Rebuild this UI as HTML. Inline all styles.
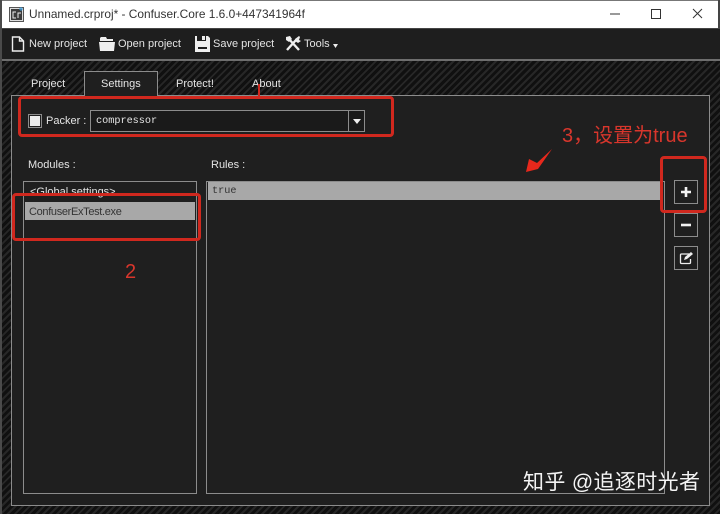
<!DOCTYPE html>
<html><head><meta charset="utf-8">
<style>
html,body{margin:0;padding:0;background:#111}
#r{position:relative;width:720px;height:514px;overflow:hidden;font-family:"Liberation Sans","Noto Sans CJK SC",sans-serif;color:#e4e4e4;font-size:11px;
background:repeating-linear-gradient(135deg,#101010 0 3px,#272727 3px 5px)}
#r div{position:absolute;box-sizing:border-box;white-space:nowrap}
.t{line-height:14px}
.mono{font-family:"Liberation Mono","DejaVu Sans Mono",monospace;font-size:10.2px}
.b{border:1px solid #8c8c8c}
.red{border:3px solid #d0281e;border-radius:4px}
</style></head><body><div id="r">
<div style="left:0;top:0;width:720px;height:28px;background:#fff"></div>
<div style="left:0;top:0;width:720px;height:1px;background:#777"></div>
<div style="left:0;top:0;width:2px;height:514px;background:#4a4a4a"></div>
<div style="left:718px;top:0;width:2px;height:28px;background:#444"></div>
<div style="left:2px;top:28px;width:718px;height:31px;background:#1e1e1e;border-top:1px solid #444"></div>
<div style="left:2px;top:59px;width:718px;height:2px;background:#6e6e6e"></div>

<svg style="position:absolute;left:9px;top:7px" width="16" height="15" viewBox="0 0 16 15"><rect x="0.5" y="0.5" width="14" height="14" fill="#ddd" stroke="#555"/><rect x="2" y="2" width="11" height="11" fill="#3c3c3c"/><path d="M7 5H4v6h3M9 11V6h3" stroke="#eee" fill="none"/><path d="M12 0v4M10 2h4" stroke="#3a9ad9"/></svg>
<div class="t" style="left:29px;top:7px;color:#333;font-size:11.900px">Unnamed.crproj* - Confuser.Core 1.6.0+447341964f</div>
<svg style="position:absolute;left:610px;top:5px" width="100" height="18" viewBox="0 0 100 18"><path d="M0 9h10" stroke="#333" stroke-width="1"/><rect x="41.500" y="4.500" width="9" height="9" fill="none" stroke="#333"/><path d="M83 4l9 9M92 4l-9 9" stroke="#333" fill="none"/></svg>

<svg style="position:absolute;left:11px;top:36px" width="14" height="16" viewBox="0 0 14 16"><path d="M1.500 1h7l4 4v10h-11zM8.500 1v4h4" fill="#1e1e1e" stroke="#eee" stroke-width="1.400"/></svg>
<div class="t" style="left:29px;top:37px">New project</div>
<svg style="position:absolute;left:99px;top:37px" width="16" height="14" viewBox="0 0 16 14"><path d="M2 0h5l1 2h6v2H1V1zM0 5h16l-1 9H1z" fill="#eee"/></svg>
<div class="t" style="left:118px;top:37px">Open project</div>
<svg style="position:absolute;left:195px;top:36px" width="15" height="16" viewBox="0 0 15 16"><path d="M0 0h2v5h9V0h2l2 2v14H0z" fill="#eee"/><rect x="3" y="11" width="9" height="2" fill="#1e1e1e"/><rect x="7" y="0" width="3" height="4" fill="#eee"/></svg>
<div class="t" style="left:213px;top:37px">Save project</div>
<svg style="position:absolute;left:285px;top:36px" width="16" height="16" viewBox="0 0 16 16"><path d="M2 14L11 4M3 2l11 12" stroke="#eee" stroke-width="2.400" fill="none"/><path d="M1 1l4-1 2 3-3 3-3-2zM10 3l4-3 1 1-1 3 2 1-3 2-3-2z" fill="#eee"/></svg>
<div class="t" style="left:304px;top:37px">Tools</div>
<svg style="position:absolute;left:333px;top:44px" width="5" height="4"><path d="M0 0h5L2.500 4z" fill="#eee"/></svg>

<div class="t" style="left:31px;top:77px">Project</div>
<div class="t" style="left:176px;top:77px">Protect!</div>
<div class="t" style="left:252px;top:77px">About</div>

<div class="b" style="left:11px;top:95px;width:699px;height:411px;background:#1f1f1f"></div>
<div class="b" style="left:84px;top:71px;width:74px;height:25px;background:#1f1f1f;border-bottom:0"></div>
<div class="t" style="left:101px;top:77px">Settings</div>

<div class="b" style="left:28px;top:114px;width:14px;height:14px;background:#1f1f1f"></div>
<div style="left:30px;top:116px;width:10px;height:10px;background:#ececec"></div>
<div class="t" style="left:46px;top:114px">Packer :</div>
<div class="b" style="left:90px;top:110px;width:275px;height:22px;background:#1a1a1a"></div>
<div style="left:348px;top:110px;width:1px;height:22px;background:#8c8c8c"></div>
<svg style="position:absolute;left:353px;top:119px" width="8" height="5"><path d="M0 0h8L4 5z" fill="#eee"/></svg>
<div class="t mono" style="left:96px;top:115px">compressor</div>

<div class="t" style="left:28px;top:158px">Modules :</div>
<div class="t" style="left:211px;top:158px">Rules :</div>

<div class="b" style="left:23px;top:181px;width:174px;height:313px"></div>
<div class="t" style="left:30px;top:185px">&lt;Global settings&gt;</div>
<div style="left:25px;top:202px;width:170px;height:18px;background:#a8a8a8"></div>
<div class="t" style="left:29px;top:205px;color:#333;font-size:11px;letter-spacing:-0.330px">ConfuserExTest.exe</div>

<div class="b" style="left:206px;top:181px;width:459px;height:313px"></div>
<div style="left:208px;top:182px;width:454px;height:18px;background:#a8a8a8"></div>
<div class="t mono" style="left:212px;top:185px;color:#333">true</div>

<div class="b" style="left:674px;top:180px;width:24px;height:24px"></div>
<svg style="position:absolute;left:680px;top:186px" width="12" height="12"><path d="M6 1v10M1 6h10" stroke="#f2f2f2" stroke-width="2.600"/></svg>
<div class="b" style="left:674px;top:213px;width:24px;height:24px"></div>
<svg style="position:absolute;left:680px;top:219px" width="12" height="12"><path d="M1 6h10" stroke="#f2f2f2" stroke-width="2.600"/></svg>
<div class="b" style="left:674px;top:246px;width:24px;height:24px"></div>
<svg style="position:absolute;left:679px;top:251px" width="15" height="14" viewBox="0 0 15 14"><path d="M10 3H2.500a1 1 0 0 0-1 1v7.500a1 1 0 0 0 1 1h8a1 1 0 0 0 1-1V8" fill="none" stroke="#eee" stroke-width="1.300"/><path d="M5 9l1-3 6-5 2 2-6 5z" fill="#eee"/></svg>

<div class="red" style="left:18px;top:96px;width:376px;height:41px"></div>
<div style="left:258px;top:84px;width:2px;height:12px;background:#d0281e"></div>
<div class="red" style="left:12px;top:193px;width:189px;height:48px"></div>
<div class="red" style="left:660px;top:156px;width:47px;height:57px"></div>
<svg style="position:absolute;left:524px;top:148px" width="30" height="26"><path d="M28 1L14 21L2 24L5 11L13 15Z" fill="#e8281c"/></svg>
<div class="t" style="left:125px;top:261px;color:#d8362c;font-size:20px;line-height:22px">2</div>
<div class="t" style="left:562px;top:125px;color:#d8362c;font-size:20px;line-height:22px">3，设置为true</div>
<div class="t" style="left:523px;top:470px;color:#f4f4f4;font-size:21px;line-height:26px;letter-spacing:0.350px">知乎 @追逐时光者</div>
</div></body></html>
